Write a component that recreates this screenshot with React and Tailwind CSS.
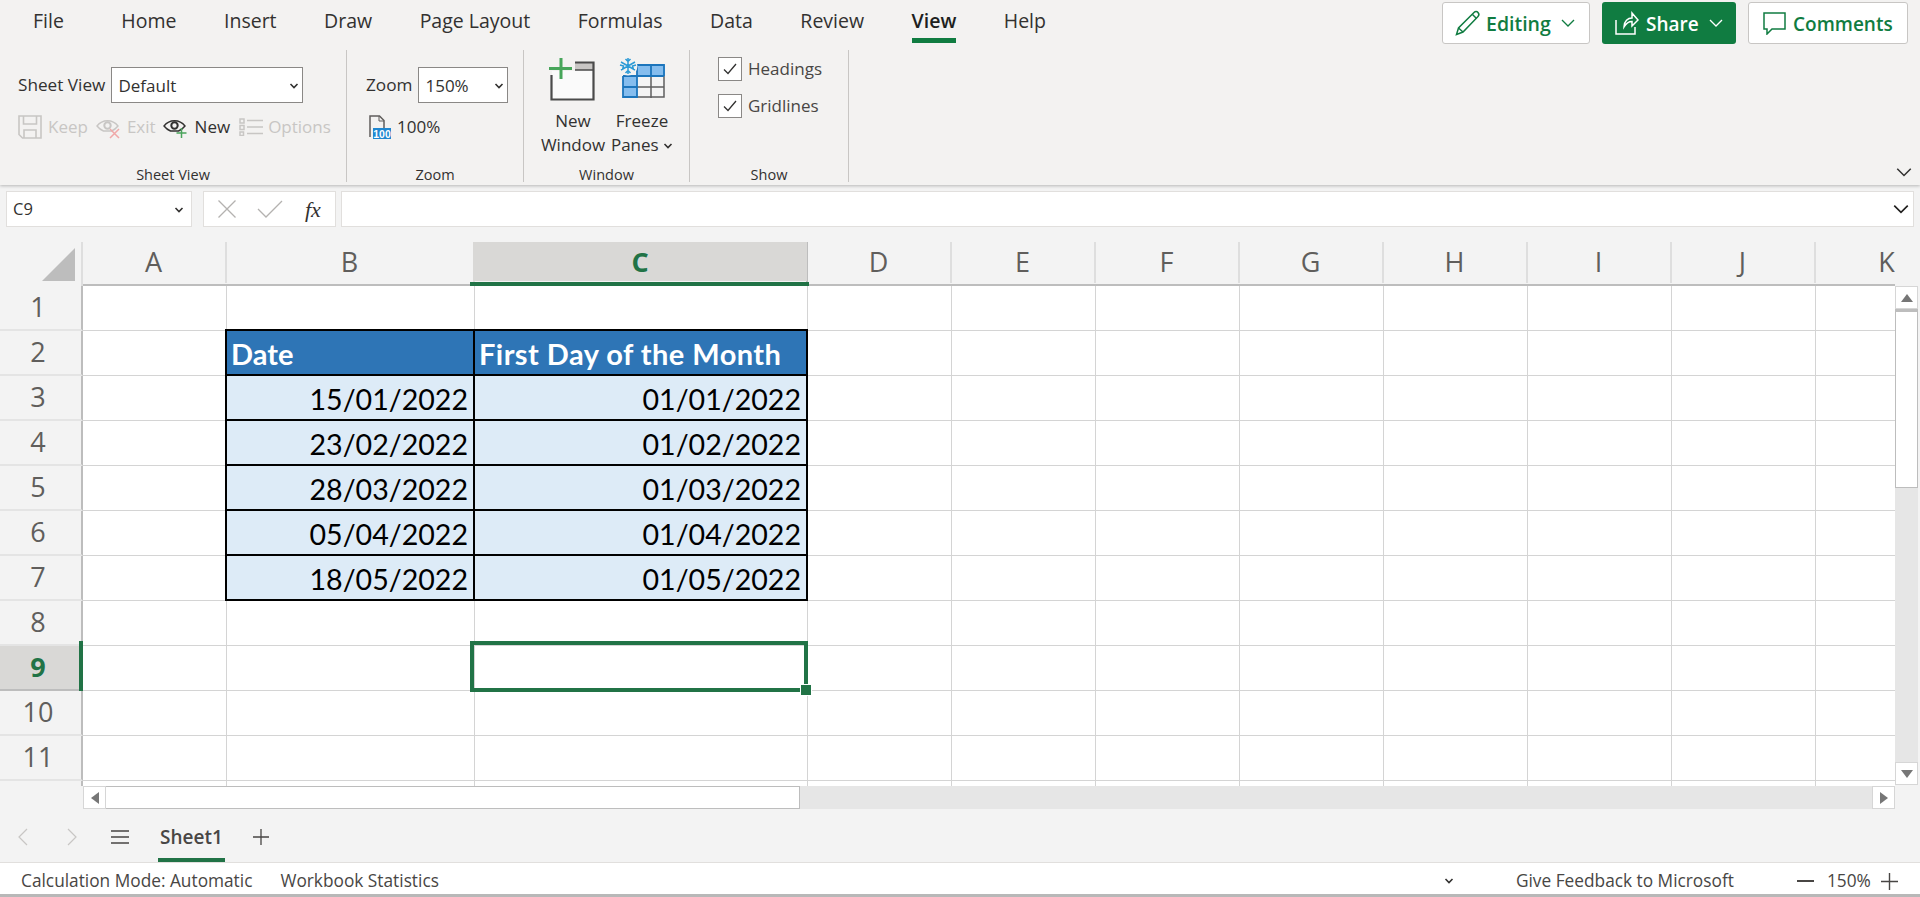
import React from 'react';

const TABS = ['File', 'Home', 'Insert', 'Draw', 'Page Layout', 'Formulas', 'Data', 'Review', 'View', 'Help'];
const COLS = ['A', 'B', 'C', 'D', 'E', 'F', 'G', 'H', 'I', 'J', 'K'];
const ROWS = [1, 2, 3, 4, 5, 6, 7, 8, 9, 10, 11, 12];
const DATA = {
  3: ['15/01/2022', '01/01/2022'],
  4: ['23/02/2022', '01/02/2022'],
  5: ['28/03/2022', '01/03/2022'],
  6: ['05/04/2022', '01/04/2022'],
  7: ['18/05/2022', '01/05/2022'],
};

function Chevron({ className, size = 12, color = '#323130', sw = 1.3 }) {
  return (
    <svg width={size} height={size} viewBox="0 0 12 12" className={className} fill="none" stroke={color} strokeWidth={sw}>
      <path d="M1.5 3.8 6 8.3l4.5-4.5" />
    </svg>
  );
}

function SmallChevron({ className }) {
  return (
    <svg width="10" height="8" viewBox="0 0 10 8" className={className} fill="none" stroke="#323130" strokeWidth="1.6">
      <path d="M1.5 2 5 5.5 8.5 2" />
    </svg>
  );
}

function SaveIcon() {
  return (
    <svg width="24" height="24" viewBox="0 0 24 24" fill="none" stroke="#c8c6c4" strokeWidth="1.6">
      <path d="M1 1h22v22H4.500L1 19.500z" />
      <path d="M5.500 1v8h13V1M6 23v-8h12v8" />
    </svg>
  );
}

function EyeIcon({ dark, badge }) {
  const c = dark ? '#323130' : '#c8c6c4';
  return (
    <svg width="25" height="24" viewBox="0 0 25 24" fill="none" stroke={c} strokeWidth="1.4">
      <path d="M1 11c5.500-7 15.500-7 21 0-2 2.500-4 4-6.500 5h-8C5 15 3 13.500 1 11z" />
      <circle cx="11.500" cy="10.500" r="3.200" strokeWidth="2" />
      {badge === 'plus' && <path d="M18.500 13v10M13.500 18h10" stroke="#4ba45c" strokeWidth="1.500" />}
      {badge === 'x' && <path d="M14 14l9 9M23 14l-9 9" stroke="#f0a8a8" strokeWidth="1.500" />}
    </svg>
  );
}

function OptionsIcon() {
  return (
    <svg width="24" height="18" viewBox="0 0 24 18" fill="none" stroke="#c8c6c4" strokeWidth="1.500">
      <path d="M1 1h4v4H1zM1 7.500h4v4H1zM1 14h3.500v3.500H1zM8 2.500h16M8 9h16M8 15.500h16" />
    </svg>
  );
}

function HundredIcon() {
  return (
    <svg width="22" height="24" viewBox="0 0 22 24" fill="none">
      <path d="M1 22V1h9.500L15 5.500V13" stroke="#605e5c" strokeWidth="1.500" />
      <path d="M10 1v5h5" stroke="#605e5c" strokeWidth="1" />
      <rect x="4" y="13" width="18" height="11" fill="#1f87d0" />
      <text x="13" y="22.500" textAnchor="middle" fontSize="10.500" fontWeight="600" fill="#fff" fontFamily="'Liberation Sans', sans-serif">100</text>
    </svg>
  );
}

function NewWindowIcon() {
  return (
    <svg width="48" height="44" viewBox="0 0 48 44" fill="none" className="-ml-[2px]">
      <rect x="4" y="14" width="42" height="28" fill="#fafafa" />
      <rect x="27" y="6" width="19" height="7" fill="#c8c6c4" />
      <path d="M27 5.500h18.500v37H3.500V18" stroke="#4a4a4a" strokeWidth="2.200" />
      <path d="M27 13h19" stroke="#4a4a4a" strokeWidth="1.500" />
      <path d="M13 1v21M1 11.500h23" stroke="#47a55a" strokeWidth="3" />
    </svg>
  );
}

function FreezeIcon() {
  const blue = '#1c75bc';
  return (
    <svg width="46" height="44" viewBox="0 0 46 44" fill="none">
      <rect x="4" y="8" width="42" height="33" fill="#f4f4f4" />
      <rect x="4" y="19" width="14" height="22" fill="#85bdee" />
      <rect x="18" y="8" width="28" height="11" fill="#85bdee" />
      <path d="M18 30h27M32 19v22M45 19v21h-27" stroke="#5f5f5f" strokeWidth="1.500" />
      <path d="M4 19h41M18 8v33M4 30h14M32 8v11M4 19v21h14M18 8h27v11" stroke={blue} strokeWidth="1.800" />
      <circle cx="9" cy="9" r="9.500" fill="#f3f2f1" />
      <path d="M9 1v16M2 5l14 8M16 5 2 13M6.500 2 9 4.500 11.500 2M6.500 16 9 13.500 11.500 16M1 8l3.500 1L3.500 12.500M17 8l-3.500 1 1 3.500" stroke="#2b9ad6" strokeWidth="1.500" />
    </svg>
  );
}

function Check({ label, dark }) {
  return (
    <div className="flex items-center gap-[6px]">
      <div className="flex h-[24px] w-[24px] items-center justify-center border border-[#8a8886] bg-white">
        <svg width="14" height="12" viewBox="0 0 14 12" fill="none" stroke="#323130" strokeWidth="1.300">
          <path d="M1 6.500 5 10.500 13 1" />
        </svg>
      </div>
      <span className={`pt-[1px] text-[17px] leading-[24px] ${dark ? 'text-[#323130]' : 'text-[#484644]'}`}>{label}</span>
    </div>
  );
}

function Group({ width, label, children }) {
  return (
    <div className={`flex h-[132px] shrink-0 flex-col border-r-[1.5px] border-[#c8c6c4] ${width}`}>
      <div className="flex-1">{children}</div>
      <div className="h-[16px] text-center text-[14.500px] leading-[17px] text-[#323130]">{label}</div>
    </div>
  );
}

function Select({ value, className }) {
  return (
    <div className={`flex h-[36px] items-center justify-between border border-[#8a8886] bg-white pl-[6px] pr-[3px] pt-[1px] text-[17px] text-[#323130] ${className}`}>
      <span>{value}</span>
      <SmallChevron />
    </div>
  );
}

function Ribbon() {
  return (
    <div className="relative h-[185px] bg-[#f3f2f1] shadow-[0_1px_3px_rgba(0,0,0,0.25)]">
      <div className="flex h-[50px] items-start justify-between">
        <div className="flex gap-[47.500px] pl-[33px] pt-[7px]">
          {TABS.map((t) => (
            <div key={t} className={`relative text-[19.500px] leading-[27px] ${t === 'View' ? 'font-semibold text-[#201f1e]' : 'text-[#323130]'} ${t === 'File' ? 'mr-[10px]' : ''}`}>
              {t}
              {t === 'View' && <div className="absolute -bottom-[9px] left-0 right-0 h-[5px] bg-[#107c41]" />}
            </div>
          ))}
        </div>
        <div className="flex gap-[12px] pr-[12px] pt-[2px]">
          <div className="flex h-[42px] w-[148px] items-center rounded-[3px] border border-[#c8c6c4] bg-white pl-[12px] text-[19.500px] font-semibold text-[#107c41]">
            <svg width="26" height="26" viewBox="0 0 26 26" fill="none" stroke="#107c41" strokeWidth="1.500">
              <path d="M1.500 24.500 3.500 18 19 2.500c1.200-1.200 3-1.200 4 0s1.200 2.800 0 4L8 22z" />
              <path d="M3.500 18 8 22M17.500 4.500l4 4" />
            </svg>
            <span className="ml-[5px] mt-[2px]">Editing</span>
            <Chevron size={16} color="#107c41" sw={1} className="ml-[9px]" />
          </div>
          <div className="flex h-[42px] w-[134px] items-center rounded-[3px] bg-[#107c41] pl-[13px] text-[19px] font-semibold text-white">
            <svg width="24" height="24" viewBox="0 0 24 24" fill="none" stroke="#fff" strokeWidth="1.500">
              <path d="M1 9v14h19v-7M9 16c0-6 4-9 8-9V2l6 7-6 6V10.500c-3 0-6 2-8 5.500z" />
            </svg>
            <span className="ml-[7px] mt-[2px]">Share</span>
            <Chevron size={16} color="#fff" sw={1} className="ml-[9px]" />
          </div>
          <div className="flex h-[42px] w-[160px] items-center rounded-[3px] border border-[#c8c6c4] bg-white pl-[14px] text-[19px] font-semibold text-[#107c41]">
            <svg width="23" height="23" viewBox="0 0 23 23" fill="none" stroke="#107c41" strokeWidth="1.500">
              <path d="M1 1h21v16H9l-5 5v-5H1z" />
            </svg>
            <span className="ml-[7px] mt-[2px]">Comments</span>
          </div>
        </div>
      </div>

      <div className="flex">
        <Group width="w-[347px]" label="Sheet View">
          <div className="flex items-center gap-[6px] pl-[18px] pt-[17px] text-[17.200px] text-[#323130]">
            <span>Sheet View</span>
            <Select value="Default" className="w-[192px]" />
          </div>
          <div className="mt-[11px] flex items-center pl-[18px] text-[17px] text-[#c8c6c4]">
            <SaveIcon />
            <span className="ml-[6px]">Keep</span>
            <span className="ml-[8px] flex"><EyeIcon badge="x" /></span>
            <span className="ml-[6px]">Exit</span>
            <span className="ml-[7px] flex"><EyeIcon dark badge="plus" /></span>
            <span className="ml-[7px] text-[#323130]">New</span>
            <span className="ml-[9px] flex"><OptionsIcon /></span>
            <span className="ml-[5px]">Options</span>
          </div>
        </Group>
        <Group width="w-[177px]" label="Zoom">
          <div className="flex items-center gap-[6px] pl-[19px] pt-[17px] text-[17.200px] text-[#323130]">
            <span>Zoom</span>
            <Select value="150%" className="w-[90px]" />
          </div>
          <div className="mt-[11px] flex items-center pl-[22px] text-[17px] text-[#323130]">
            <HundredIcon />
            <span className="ml-[6px]">100%</span>
          </div>
        </Group>
        <Group width="w-[166px]" label="Window">
          <div className="flex pl-[15px] pt-[7px] text-[17px] leading-[24px] text-[#323130]">
            <div className="flex w-[68px] flex-col items-center">
              <NewWindowIcon />
              <div className="mt-[8px] text-center">New<br />Window</div>
            </div>
            <div className="ml-[4px] flex w-[62px] flex-col items-center">
              <FreezeIcon />
              <div className="mt-[8px] whitespace-nowrap text-center">
                Freeze<br />Panes <SmallChevron className="inline" />
              </div>
            </div>
          </div>
        </Group>
        <Group width="w-[159px]" label="Show">
          <div className="flex flex-col gap-[12px] pl-[28px] pt-[6px]">
            <Check label="Headings" />
            <Check label="Gridlines" />
          </div>
        </Group>
      </div>
      <Chevron size={18} sw={1} className="absolute bottom-[4px] right-[7px]" />
    </div>
  );
}

function FormulaBar() {
  return (
    <div className="flex h-[57px] items-start gap-[5px] pl-[6px] pr-[6px] pt-[6px]">
      <div className="mr-[6px] flex h-[36px] w-[186px] items-center justify-between border border-[#e1dfdd] bg-white pl-[6px] pr-[7px] pt-[1px] text-[16.500px] text-[#323130]">
        <span>C9</span>
        <SmallChevron />
      </div>
      <div className="flex h-[36px] w-[133px] items-center border border-[#e1dfdd] bg-white pl-[13px]">
        <svg width="20" height="20" viewBox="0 0 20 20" fill="none" stroke="#b4b2b0" strokeWidth="1.300">
          <path d="M1.500 1.500l17 17M18.500 1.500l-17 17" />
        </svg>
        <svg width="26" height="18" viewBox="0 0 26 18" fill="none" stroke="#b4b2b0" strokeWidth="1.300" className="ml-[20px]">
          <path d="M1 9l8 8L25 1" />
        </svg>
        <span className="ml-[22px] font-['Liberation_Serif',serif] text-[22px] italic text-[#323130]">fx</span>
      </div>
      <div className="flex h-[36px] flex-1 items-center justify-end border border-[#e1dfdd] bg-white pr-[3px]">
        <Chevron size={18} color="#201f1e" sw={1.100} />
      </div>
    </div>
  );
}

function ColHead({ c }) {
  const active = c === 'C';
  return (
    <div className={`relative flex items-center justify-center border-b-[2px] pb-[2px] pr-[3px] text-[27px] ${active ? 'border-transparent font-bold text-[#217346]' : 'border-[#bdbdbd] text-[#605e5c]'}`}>
      <div className={`absolute right-0 top-0 h-[41px] w-[2px] ${active ? 'bg-[#bdbdbd]' : 'bg-[#dedede]'}`} />
      {active && <div className="absolute bottom-[3px] left-[-2px] right-[1px] top-0 -z-0 bg-[#d9d8d6]" />}
      {active && <div className="absolute -bottom-[2px] -left-[5px] -right-[1px] z-10 h-[4px] bg-[#217346]" />}
      <span className="relative">{c}</span>
    </div>
  );
}

function RowHead({ r }) {
  const active = r === 9;
  return (
    <div className={`relative flex items-center justify-center border-r-[2px] border-[#bdbdbd] pr-[5px] text-[27px] ${active ? 'border-b-[2px] bg-[#d9d8d6] font-bold text-[#217346]' : 'border-b-[2px] border-b-[#e4e4e4] text-[#605e5c]'} ${r === 8 ? 'border-b-[#bdbdbd]' : ''}`}>
      {active && <div className="absolute -bottom-[2px] -top-[5px] right-[-2px] z-10 w-[4px] bg-[#217346]" />}
      {r < 12 && r}
    </div>
  );
}

function Cell({ r, c }) {
  const inTable = r >= 2 && r <= 7 && (c === 'B' || c === 'C');
  if (inTable) {
    const header = r === 2;
    const idx = c === 'B' ? 0 : 1;
    return (
      <div className={`relative flex items-center font-['Lato',sans-serif] ${header ? `bg-[#2e75b6] pl-[4px] pt-[1px] text-[29px] font-bold text-white ${c === 'C' ? 'tracking-[0.45px]' : ''}` : 'justify-end bg-[#ddebf7] pr-[7px] pt-[2px] text-[28.600px] text-black'}`}>
        <div className="absolute -left-[2px] -top-[2px] bottom-0 right-0 z-[1] border-2 border-black" />
        {header ? (c === 'B' ? 'Date' : 'First Day of the Month') : DATA[r][idx]}
      </div>
    );
  }
  const active = r === 9 && c === 'C';
  return (
    <div className="relative border-b border-r border-[#d4d4d4] bg-white">
      {active && (
        <>
          <div className="absolute -bottom-[2px] -left-[5px] -right-[1px] -top-[5px] z-10 border-[4px] border-[#217346]" />
          <div className="absolute -bottom-[6px] -right-[5px] z-20 h-[12px] w-[12px] border border-white bg-[#217346]" />
        </>
      )}
    </div>
  );
}

function Triangle({ points }) {
  return (
    <svg width="14" height="14" viewBox="0 0 14 14">
      <polygon points={points} fill="#767676" />
    </svg>
  );
}

function ScrollButton({ points }) {
  return (
    <div className="flex h-[23px] w-[23px] shrink-0 items-center justify-center border border-[#d6d6d6] bg-white">
      <Triangle points={points} />
    </div>
  );
}

function Sheet() {
  return (
    <div className="flex h-[544px]">
      <div className="w-[1895px] shrink-0 overflow-hidden">
        <div className="relative grid h-[544px] w-[1960px] grid-cols-[83px_144px_248px_333px_repeat(8,144px)] grid-rows-[44px_repeat(12,45px)]">
          <div className="flex items-end justify-end border-r-[2px] border-[#dedede] pb-[5px] pr-[5px]">
            <svg width="34" height="34" viewBox="0 0 34 34">
              <polygon points="33,1 33,34 0,34" fill="#bdbdbd" />
            </svg>
          </div>
          {COLS.map((c) => <ColHead key={c} c={c} />)}
          {ROWS.map((r) => (
            <React.Fragment key={r}>
              <RowHead r={r} />
              {COLS.map((c) => <Cell key={c} r={r} c={c} />)}
            </React.Fragment>
          ))}
        </div>
      </div>
      <div className="flex flex-1 flex-col pr-[2px] pt-[44px]">
        <ScrollButton points="7,3 13,11 1,11" />
        <div className="h-[179px] border border-t-[3px] border-[#bdbdbd] bg-white" />
        <div className="h-[274px] bg-[#e6e6e6]" />
        <ScrollButton points="1,3 13,3 7,11" />
      </div>
    </div>
  );
}

function HScroll() {
  return (
    <div className="relative z-20 flex h-[23px] bg-[#f3f3f3] pl-[83px] pr-[25px]">
      <ScrollButton points="11,1 11,13 3,7" />
      <div className="w-[694px] border-y border-r border-[#bdbdbd] bg-white" />
      <div className="flex-1 bg-[#e6e6e6]" />
      <ScrollButton points="3,1 11,7 3,13" />
    </div>
  );
}

function TabBar() {
  return (
    <div className="flex h-[53px] items-center bg-[#f3f3f3] pt-[3px] text-[#484644]">
      <svg width="12" height="18" viewBox="0 0 12 18" fill="none" stroke="#c8c6c4" strokeWidth="1.200" className="ml-[17px]">
        <path d="M10 1 2 9l8 8" />
      </svg>
      <svg width="12" height="18" viewBox="0 0 12 18" fill="none" stroke="#c8c6c4" strokeWidth="1.200" className="ml-[37px]">
        <path d="M2 1l8 8-8 8" />
      </svg>
      <svg width="20" height="16" viewBox="0 0 20 16" fill="none" stroke="#484644" strokeWidth="1.500" className="ml-[32px]">
        <path d="M1 2h18M1 8h18M1 14h18" />
      </svg>
      <div className="relative ml-[28px] flex h-[50px] w-[67px] items-center justify-center text-[19px] font-semibold text-[#484644]">
        Sheet1
        <div className="absolute bottom-0 left-0 right-0 h-[4px] bg-[#217346]" />
      </div>
      <svg width="18" height="18" viewBox="0 0 18 18" fill="none" stroke="#484644" strokeWidth="1.300" className="ml-[27px]">
        <path d="M9 1v16M1 9h16" />
      </svg>
    </div>
  );
}

function StatusBar() {
  return (
    <div className="flex h-[35px] items-center border-b-[3px] border-t-[1px] border-b-[#b8b8b8] border-t-[#e1dfdd] bg-white pl-[21px] pt-[5px] text-[17.300px] text-[#484644]">
      <span>Calculation Mode: Automatic</span>
      <span className="ml-[28px]">Workbook Statistics</span>
      <SmallChevron className="ml-[1005px]" />
      <span className="ml-[62px]">Give Feedback to Microsoft</span>
      <svg width="17" height="2" viewBox="0 0 17 2" className="ml-[63px]">
        <rect width="17" height="2" fill="#484644" />
      </svg>
      <span className="ml-[13px]">150%</span>
      <svg width="17" height="17" viewBox="0 0 17 17" fill="none" stroke="#484644" strokeWidth="1.400" className="ml-[10px]">
        <path d="M8.500 0v17M0 8.500h17" />
      </svg>
    </div>
  );
}

export default function App() {
  return (
    <div className="h-[897px] w-[1920px] overflow-hidden bg-[#f3f3f3] font-['Open_Sans',sans-serif]">
      <Ribbon />
      <FormulaBar />
      <Sheet />
      <HScroll />
      <TabBar />
      <StatusBar />
    </div>
  );
}
